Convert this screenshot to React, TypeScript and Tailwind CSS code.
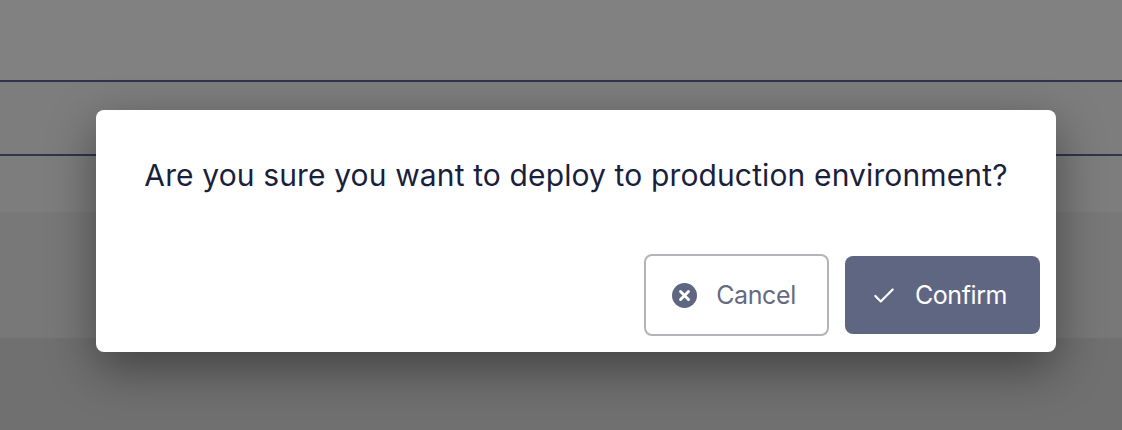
import React from 'react';
import { Check } from 'lucide-react';

function CancelIcon() {
  return (
    <svg width="25" height="25" viewBox="0 0 24 24" className="mt-[-2px] shrink-0">
      <circle cx="12" cy="12" r="12" fill="#5f6682" />
      <path d="M8.2 8.2l7.6 7.6M15.8 8.2l-7.6 7.6" stroke="#ffffff" strokeWidth="2.8" strokeLinecap="round" />
    </svg>
  );
}

export default function App() {
  return (
    <div className="relative h-[430px] w-[1122px] overflow-hidden bg-[#808080] font-['Inter','Noto_Sans',sans-serif]">
      {/* Dimmed page behind the dialog */}
      <div className="flex h-full flex-col">
        <div className="h-[80px] bg-[#818181]" />
        <div className="h-[2px] bg-[#32324a]" />
        <div className="h-[72px] bg-[#7d7d7d]" />
        <div className="h-[2px] bg-[#32324a]" />
        <div className="h-[56px] bg-[#7d7d7d]" />
        <div className="h-[126px] bg-[#787878]" />
        <div className="flex-1 bg-[#707070]" />
      </div>

      <div className="absolute left-[96px] top-[110px] flex h-[242px] w-[960px] flex-col rounded-[8px] bg-white shadow-[0_16px_48px_rgba(0,0,0,0.42)]">
        <p className="mt-[44px] text-center text-[30px] leading-[42px] tracking-[0.13px] text-[#1a1f3c]">
          Are you sure you want to deploy to production environment?
        </p>
        <div className="mt-auto flex items-center justify-end gap-4 pb-[16px] pr-[16px]">
          <button className="flex h-[82px] w-[185px] items-center justify-center gap-[19px] rounded-[8px] border-2 border-[#b3b3b8] bg-white pr-[5px] pt-[2px] text-[25px] tracking-[-0.4px] text-[#666a80]">
            <CancelIcon />
            Cancel
          </button>
          <button className="flex h-[78px] w-[195px] items-center justify-center gap-[18px] rounded-[8px] bg-[#5f6682] pr-[7px] pt-[2px] text-[25px] tracking-[-0.4px] text-white">
            <Check size={26} strokeWidth={2} />
            Confirm
          </button>
        </div>
      </div>
    </div>
  );
}
